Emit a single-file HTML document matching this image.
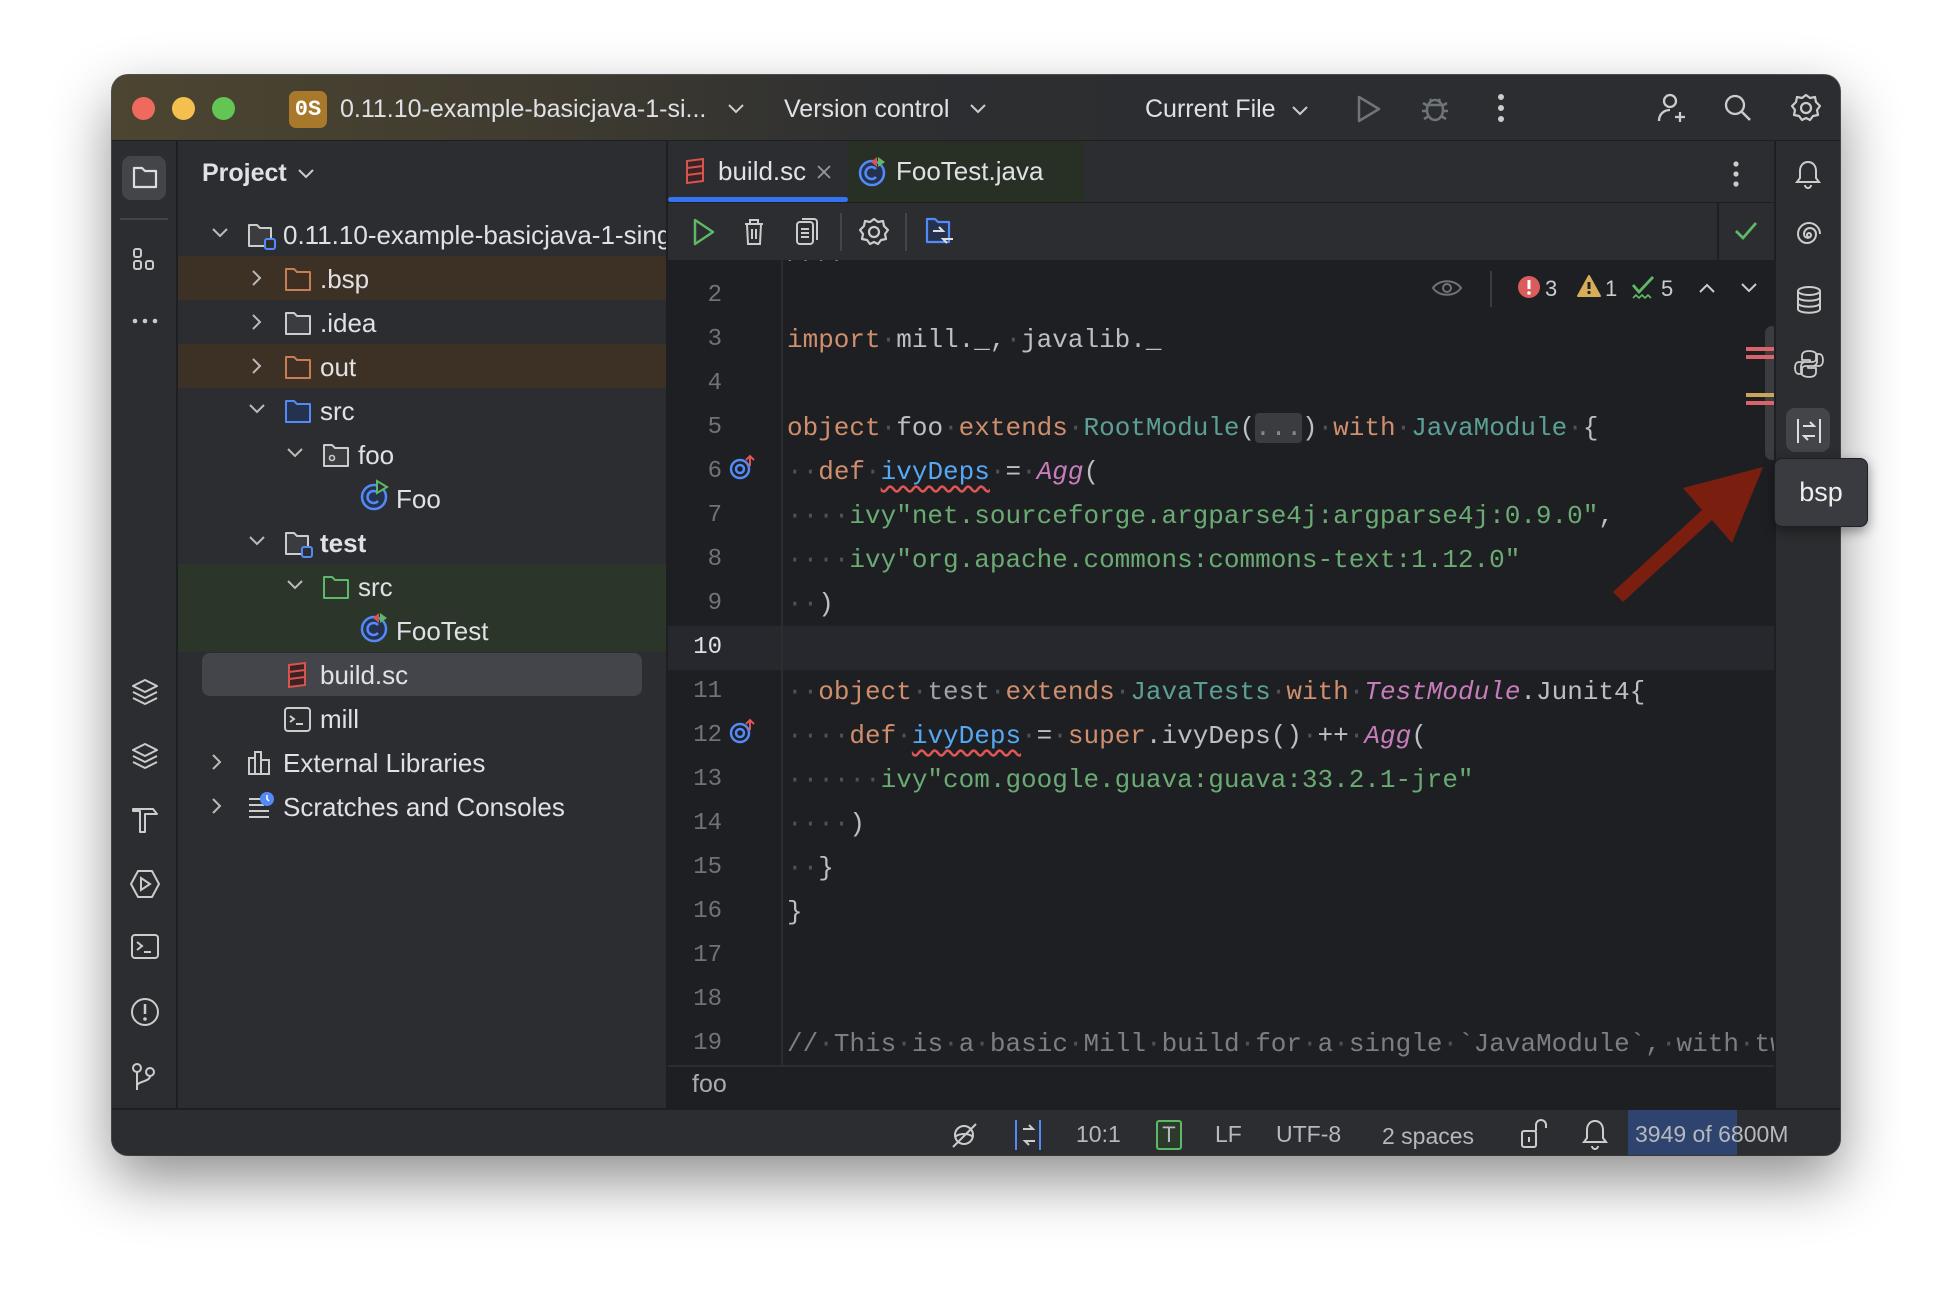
<!DOCTYPE html>
<html><head><meta charset="utf-8"><style>
*{margin:0;padding:0;box-sizing:border-box}
body{width:1952px;height:1304px;background:#fff;position:relative;overflow:hidden;font-family:"Liberation Sans",sans-serif;color:#dfe1e5}
.abs{position:absolute}
.win{position:absolute;left:112px;top:75px;width:1728px;height:1080px;border-radius:16px;background:#2b2d30;box-shadow:0 25px 60px rgba(0,0,0,.45),0 0 0 1px #555;overflow:hidden}
.title{position:absolute;left:0;top:0;width:1728px;height:66px;background:linear-gradient(90deg,#4c4531 0%,#3f3b30 25%,#2e2f31 45%,#2b2d30 60%);border-bottom:1px solid #1e1f22}
.t{position:absolute;white-space:nowrap;font-size:25px;line-height:30px}
.tree .tx{position:absolute;font-size:26px;line-height:30px;white-space:nowrap;color:#dfe1e5}
.code{position:absolute;left:556px;top:185px;width:1106px;height:805px;background:#1e1f22;overflow:hidden}
.ln{position:absolute;right:1052px;width:60px;text-align:right;font:24px "Liberation Mono",monospace;color:#6f737a}
.cl{position:absolute;left:119px;white-space:pre;font:26px/44px "Liberation Mono",monospace;color:#bcbec4;height:44px}
.d{color:#4e5157}.k{color:#cf8e6d}.s{color:#6aab73}.c{color:#5c9f96}.p{color:#c77dbb;font-style:italic}.f{color:#56a8f5;text-decoration:underline wavy #e05555;text-underline-offset:6px}.g{color:#7a7e85}.gr{color:#a0a3a8}
svg{position:absolute;overflow:visible}
</style></head><body>
<div class="win">
 <div class="title">
  <div class="abs" style="left:20px;top:22px;width:23px;height:23px;border-radius:50%;background:#ee6a5f"></div>
  <div class="abs" style="left:60px;top:22px;width:23px;height:23px;border-radius:50%;background:#f5bf4f"></div>
  <div class="abs" style="left:100px;top:22px;width:23px;height:23px;border-radius:50%;background:#62c554"></div>
  <div class="abs" style="left:177px;top:16px;width:38px;height:37px;border-radius:7px;background:#a8792a;color:#fff;font:bold 22px/37px 'Liberation Mono',monospace;text-align:center">0S</div>
  <div class="t" style="left:228px;top:19px;color:#dfe1e5">0.11.10-example-basicjava-1-si...</div>
  <svg style="left:616px;top:29px" width="16" height="10"><path d="M1 1l7 7 7-7" stroke="#ccc" stroke-width="2" fill="none"/></svg>
  <div class="t" style="left:672px;top:19px">Version control</div>
  <svg style="left:858px;top:29px" width="16" height="10"><path d="M1 1l7 7 7-7" stroke="#ccc" stroke-width="2" fill="none"/></svg>
  <div class="t" style="left:1033px;top:19px">Current File</div>
  <svg style="left:1180px;top:31px" width="16" height="10"><path d="M1 1l7 7 7-7" stroke="#ccc" stroke-width="2" fill="none"/></svg>
  <svg style="left:1244px;top:20px" width="26" height="28"><path d="M3 2l20 12L3 26z" stroke="#6f737a" stroke-width="2.5" fill="none" stroke-linejoin="round"/></svg>
  <svg style="left:1308px;top:18px" width="30" height="30"><ellipse cx="15" cy="17" rx="8" ry="10" stroke="#6f737a" stroke-width="2.5" fill="none"/><path d="M8 12h14M3 10l5 3M27 10l-5 3M2 18h5M28 18h-5M4 26l5-3M26 26l-5-3M10 6l2 3M20 6l-2 3" stroke="#6f737a" stroke-width="2.5"/></svg>
  <svg style="left:1385px;top:18px" width="8" height="30"><circle cx="4" cy="4" r="3" fill="#ccc"/><circle cx="4" cy="15" r="3" fill="#ccc"/><circle cx="4" cy="26" r="3" fill="#ccc"/></svg>
  <svg style="left:1545px;top:18px" width="30" height="32"><circle cx="13" cy="8" r="6" stroke="#ccc" stroke-width="2.3" fill="none"/><path d="M2 28c0-7 5-11 11-11M18 24h10M23 19v10" stroke="#ccc" stroke-width="2.3" fill="none"/></svg>
  <svg style="left:1612px;top:19px" width="28" height="28"><circle cx="11" cy="11" r="9" stroke="#ccc" stroke-width="2.3" fill="none"/><path d="M18 18l8 8" stroke="#ccc" stroke-width="2.5"/></svg>
  <svg style="left:1679px;top:18px" width="30" height="30"><path d="M15 2l4 3 5-1 1 5 4 4-3 4 1 5-5 1-3 4-4-2-4 2-3-4-5-1 1-5-3-4 4-4 1-5 5 1z" stroke="#ccc" stroke-width="2.2" fill="none" stroke-linejoin="round"/><circle cx="15" cy="15" r="5" stroke="#ccc" stroke-width="2.2" fill="none"/></svg>
 </div>

 <!-- left strip -->
 <div class="abs" style="left:0;top:66px;width:66px;height:967px;background:#2b2d30;border-right:2px solid #1e1f22"></div>
 <div class="abs" style="left:10px;top:81px;width:44px;height:44px;border-radius:9px;background:#43454a"></div>
 <svg style="left:20px;top:90px" width="26" height="24"><path d="M2 3h8l3 3h11v16H2z" stroke="#ddd" stroke-width="2.2" fill="none" stroke-linejoin="round"/></svg>
 <div class="abs" style="left:8px;top:143px;width:48px;height:2px;background:#43454a"></div>
 <svg style="left:20px;top:172px" width="24" height="26"><rect x="2" y="2" width="7" height="8" rx="2" stroke="#ccc" stroke-width="2" fill="none"/><rect x="2" y="14" width="7" height="8" rx="2" stroke="#ccc" stroke-width="2" fill="none"/><rect x="14" y="14" width="7" height="8" rx="2" stroke="#ccc" stroke-width="2" fill="none"/></svg>
 <svg style="left:20px;top:243px" width="26" height="6"><circle cx="3" cy="3" r="2.3" fill="#ccc"/><circle cx="13" cy="3" r="2.3" fill="#ccc"/><circle cx="23" cy="3" r="2.3" fill="#ccc"/></svg>
 <svg style="left:19px;top:603px" width="28" height="28"><path d="M14 2L26 8 14 14 2 8z M2 14l12 6 12-6 M2 20l12 6 12-6" stroke="#ccc" stroke-width="2" fill="none" stroke-linejoin="round"/></svg>
 <svg style="left:19px;top:667px" width="28" height="28"><path d="M14 2L26 8 14 14 2 8z M2 14l12 6 12-6 M2 20l12 6 12-6" stroke="#ccc" stroke-width="2" fill="none" stroke-linejoin="round"/></svg>
 <svg style="left:19px;top:730px" width="28" height="30"><path d="M2 4h20l4 5H14v18H9V6H2z" stroke="#ccc" stroke-width="2" fill="none" stroke-linejoin="round"/></svg>
 <svg style="left:17px;top:794px" width="32" height="30"><path d="M9 2h14l7 13-7 13H9L2 15z" stroke="#ccc" stroke-width="2" fill="none"/><path d="M12 9l9 6-9 6z" stroke="#ccc" stroke-width="2" fill="none"/></svg>
 <svg style="left:19px;top:859px" width="28" height="26"><rect x="1" y="1" width="26" height="23" rx="3" stroke="#ccc" stroke-width="2" fill="none"/><path d="M6 8l5 4-5 4M13 18h7" stroke="#ccc" stroke-width="2" fill="none"/></svg>
 <svg style="left:18px;top:922px" width="30" height="30"><circle cx="15" cy="15" r="13" stroke="#ccc" stroke-width="2" fill="none"/><path d="M15 7v10" stroke="#ccc" stroke-width="2.5"/><circle cx="15" cy="22" r="1.8" fill="#ccc"/></svg>
 <svg style="left:19px;top:987px" width="26" height="30"><circle cx="6" cy="6" r="4" stroke="#ccc" stroke-width="2" fill="none"/><circle cx="19" cy="10" r="4" stroke="#ccc" stroke-width="2" fill="none"/><path d="M6 10v18M19 14c0 6-13 5-13 10" stroke="#ccc" stroke-width="2" fill="none"/></svg>

 <!-- project panel -->
 <div class="abs" style="left:90px;top:84px;font-size:25px;font-weight:bold;color:#dfe1e5">Project</div>
 <svg style="left:186px;top:94px" width="16" height="10"><path d="M1 1l7 7 7-7" stroke="#ccc" stroke-width="2" fill="none"/></svg>
 <div class="tree">
  <div class="abs" style="left:66px;top:181px;width:490px;height:44px;background:#3d3024"></div>
  <div class="abs" style="left:66px;top:269px;width:490px;height:44px;background:#3d3024"></div>
  <div class="abs" style="left:66px;top:489px;width:490px;height:88px;background:#2b3529"></div>
  <div class="abs" style="left:90px;top:578px;width:440px;height:43px;border-radius:8px;background:#43454a"></div>
  <svg style="left:100px;top:153px" width="16" height="10"><path d="M1 1l7 7 7-7" stroke="#bbb" stroke-width="2" fill="none"/></svg>
  <svg style="left:140px;top:195px" width="10" height="16"><path d="M1 1l7 7-7 7" stroke="#bbb" stroke-width="2" fill="none"/></svg>
  <svg style="left:140px;top:239px" width="10" height="16"><path d="M1 1l7 7-7 7" stroke="#bbb" stroke-width="2" fill="none"/></svg>
  <svg style="left:140px;top:283px" width="10" height="16"><path d="M1 1l7 7-7 7" stroke="#bbb" stroke-width="2" fill="none"/></svg>
  <svg style="left:137px;top:329px" width="16" height="10"><path d="M1 1l7 7 7-7" stroke="#bbb" stroke-width="2" fill="none"/></svg>
  <svg style="left:175px;top:373px" width="16" height="10"><path d="M1 1l7 7 7-7" stroke="#bbb" stroke-width="2" fill="none"/></svg>
  <svg style="left:137px;top:461px" width="16" height="10"><path d="M1 1l7 7 7-7" stroke="#bbb" stroke-width="2" fill="none"/></svg>
  <svg style="left:175px;top:505px" width="16" height="10"><path d="M1 1l7 7 7-7" stroke="#bbb" stroke-width="2" fill="none"/></svg>
  <svg style="left:100px;top:679px" width="10" height="16"><path d="M1 1l7 7-7 7" stroke="#bbb" stroke-width="2" fill="none"/></svg>
  <svg style="left:100px;top:723px" width="10" height="16"><path d="M1 1l7 7-7 7" stroke="#bbb" stroke-width="2" fill="none"/></svg>
  <svg style="left:135px;top:148px" width="32" height="28"><path d="M2 2h8l3 3h11v18H2z" stroke="#ccc" stroke-width="2" fill="#3a3c40" stroke-linejoin="round"/><rect x="18" y="16" width="10" height="10" rx="2" stroke="#548af7" stroke-width="2" fill="#2b2d30"/></svg>
  <svg style="left:172px;top:192px" width="30" height="26"><path d="M2 2h8l3 3h13v18H2z" stroke="#c77d55" stroke-width="2" fill="#3f2f22" stroke-linejoin="round"/></svg>
  <svg style="left:172px;top:236px" width="30" height="26"><path d="M2 2h8l3 3h13v18H2z" stroke="#ccc" stroke-width="2" fill="#3a3c40" stroke-linejoin="round"/></svg>
  <svg style="left:172px;top:280px" width="30" height="26"><path d="M2 2h8l3 3h13v18H2z" stroke="#c77d55" stroke-width="2" fill="#3f2f22" stroke-linejoin="round"/></svg>
  <svg style="left:172px;top:324px" width="30" height="26"><path d="M2 2h8l3 3h13v18H2z" stroke="#548af7" stroke-width="2" fill="#25324d" stroke-linejoin="round"/></svg>
  <svg style="left:210px;top:368px" width="30" height="26"><path d="M2 2h8l3 3h13v18H2z" stroke="#ccc" stroke-width="2" fill="#3a3c40" stroke-linejoin="round"/><circle cx="10" cy="15" r="2.5" stroke="#ccc" stroke-width="1.6" fill="none"/></svg>
  <svg style="left:248px;top:404px" width="32" height="32"><circle cx="14" cy="18" r="12" stroke="#548af7" stroke-width="2.5" fill="#25324d"/><path d="M18 14a6 6 0 1 0 0 8" stroke="#548af7" stroke-width="2.5" fill="none"/><path d="M17 2l10 6-10 6z" fill="#2b2d30" stroke="#5fb865" stroke-width="2"/></svg>
  <svg style="left:172px;top:456px" width="32" height="28"><path d="M2 2h8l3 3h11v18H2z" stroke="#ccc" stroke-width="2" fill="#3a3c40" stroke-linejoin="round"/><rect x="18" y="16" width="10" height="10" rx="2" stroke="#548af7" stroke-width="2" fill="#2b2d30"/></svg>
  <svg style="left:210px;top:500px" width="30" height="26"><path d="M2 2h8l3 3h13v18H2z" stroke="#5fb865" stroke-width="2" fill="#2b3529" stroke-linejoin="round"/></svg>
  <svg style="left:248px;top:536px" width="32" height="32"><circle cx="14" cy="18" r="12" stroke="#548af7" stroke-width="2.5" fill="#25324d"/><path d="M18 14a6 6 0 1 0 0 8" stroke="#548af7" stroke-width="2.5" fill="none"/><path d="M19 2l-6 5 6 5z" fill="#d9534f"/><path d="M20 2l7 5-7 5z" fill="#5fb865"/></svg>
  <svg style="left:174px;top:586px" width="22" height="28"><path d="M3 4l16-2v22l-16 2z M3 11l16-2 M3 18l16-2" stroke="#d9534f" stroke-width="2" fill="#3a2322"/></svg>
  <svg style="left:172px;top:632px" width="28" height="26"><rect x="1" y="1" width="25" height="23" rx="3" stroke="#ccc" stroke-width="2" fill="none"/><path d="M6 9l4 3-4 3M12 17h7" stroke="#ccc" stroke-width="2" fill="none"/></svg>
  <svg style="left:135px;top:675px" width="26" height="26"><path d="M2 8h6v16H2z M8 2h6v22H8z M14 10h8v14h-8z" stroke="#ccc" stroke-width="2" fill="none"/></svg>
  <svg style="left:135px;top:716px" width="28" height="30"><path d="M2 8h12M2 14h15M2 20h20M2 26h20" stroke="#ccc" stroke-width="2"/><circle cx="20" cy="8" r="7" fill="#548af7"/><path d="M20 4v4l2 2" stroke="#fff" stroke-width="1.5" fill="none"/></svg>
  <div class="tx" style="left:171px;top:145px">0.11.10-example-basicjava-1-single-module</div>
  <div class="tx" style="left:208px;top:189px">.bsp</div>
  <div class="tx" style="left:208px;top:233px">.idea</div>
  <div class="tx" style="left:208px;top:277px">out</div>
  <div class="tx" style="left:208px;top:321px">src</div>
  <div class="tx" style="left:246px;top:365px">foo</div>
  <div class="tx" style="left:284px;top:409px">Foo</div>
  <div class="tx" style="left:208px;top:453px;font-weight:bold">test</div>
  <div class="tx" style="left:246px;top:497px">src</div>
  <div class="tx" style="left:284px;top:541px">FooTest</div>
  <div class="tx" style="left:208px;top:585px">build.sc</div>
  <div class="tx" style="left:208px;top:629px">mill</div>
  <div class="tx" style="left:171px;top:673px">External Libraries</div>
  <div class="tx" style="left:171px;top:717px">Scratches and Consoles</div>
 </div>
 <div class="abs" style="left:554px;top:66px;width:2px;height:1000px;background:#1e1f22"></div>

 <!-- tabs -->
 <div class="abs" style="left:556px;top:66px;width:1106px;height:62px;background:#2b2d30;border-bottom:1px solid #1e1f22"></div>
 <div class="abs" style="left:736px;top:66px;width:236px;height:61px;background:#283026"></div>
 <div class="abs" style="left:556px;top:122px;width:180px;height:5px;border-radius:3px;background:#3574f0"></div>
 <svg style="left:572px;top:82px" width="22" height="28"><path d="M3 4l16-2v22l-16 2z M3 11l16-2 M3 18l16-2" stroke="#d9534f" stroke-width="2" fill="#3a2322"/></svg>
 <div class="t" style="left:606px;top:81px;font-size:26px">build.sc</div>
 <svg style="left:705px;top:90px" width="14" height="14"><path d="M1 1l12 12M13 1L1 13" stroke="#999" stroke-width="1.8"/></svg>
 <svg style="left:746px;top:80px" width="32" height="32"><circle cx="14" cy="18" r="12" stroke="#548af7" stroke-width="2.5" fill="#25324d"/><path d="M18 14a6 6 0 1 0 0 8" stroke="#548af7" stroke-width="2.5" fill="none"/><path d="M19 2l-6 5 6 5z" fill="#d9534f"/><path d="M20 2l7 5-7 5z" fill="#5fb865"/></svg>
 <div class="t" style="left:784px;top:81px;font-size:26px">FooTest.java</div>
 <svg style="left:1620px;top:86px" width="8" height="26"><circle cx="4" cy="3" r="2.6" fill="#ccc"/><circle cx="4" cy="13" r="2.6" fill="#ccc"/><circle cx="4" cy="23" r="2.6" fill="#ccc"/></svg>

 <!-- editor toolbar -->
 <div class="abs" style="left:556px;top:128px;width:1106px;height:57px;background:#2b2d30"></div>
 <svg style="left:580px;top:143px" width="24" height="28"><path d="M3 2l18 12L3 26z" stroke="#5fb865" stroke-width="2.5" fill="none" stroke-linejoin="round"/></svg>
 <svg style="left:631px;top:142px" width="22" height="30"><path d="M2 7h18M7 7V3h8v4M4 7l1 20h12l1-20M9 12v10M13 12v10" stroke="#ccc" stroke-width="2" fill="none"/></svg>
 <svg style="left:683px;top:142px" width="24" height="30"><rect x="2" y="5" width="16" height="22" rx="3" stroke="#ccc" stroke-width="2" fill="none"/><path d="M7 2h12a3 3 0 0 1 3 3v18M6 12h8M6 16h8M6 20h8" stroke="#ccc" stroke-width="2" fill="none"/></svg>
 <div class="abs" style="left:728px;top:138px;width:2px;height:38px;background:#43454a"></div>
 <svg style="left:747px;top:142px" width="30" height="30"><path d="M15 2l4 3 5-1 1 5 4 4-3 4 1 5-5 1-3 4-4-2-4 2-3-4-5-1 1-5-3-4 4-4 1-5 5 1z" stroke="#ccc" stroke-width="2.2" fill="none" stroke-linejoin="round"/><circle cx="15" cy="15" r="5" stroke="#ccc" stroke-width="2.2" fill="none"/></svg>
 <div class="abs" style="left:793px;top:138px;width:2px;height:38px;background:#43454a"></div>
 <svg style="left:813px;top:142px" width="32" height="30"><path d="M2 2h8l3 3h11v20H2z" stroke="#548af7" stroke-width="2.2" fill="#25324d" stroke-linejoin="round"/><path d="M8 14h10l-4-4M28 22H18l4 4" stroke="#ddd" stroke-width="2" fill="none"/></svg>
 <div class="abs" style="left:1605px;top:128px;width:2px;height:57px;background:#1e1f22"></div>
 <svg style="left:1622px;top:146px" width="24" height="20"><path d="M2 10l7 7L22 2" stroke="#5fb865" stroke-width="2.8" fill="none"/></svg>

 <!-- code -->
 <div class="code">
  <div class="abs" style="left:0;top:366px;width:1106px;height:44px;background:#26282e"></div>
  <div class="abs" style="left:113px;top:0;width:2px;height:805px;background:#2b2d30"></div>
  <div class="cl g" style="top:-28px">////</div>
  <div class="ln" style="top:22px">2</div><div class="ln" style="top:66px">3</div><div class="ln" style="top:110px">4</div><div class="ln" style="top:154px">5</div><div class="ln" style="top:198px">6</div><div class="ln" style="top:242px">7</div><div class="ln" style="top:286px">8</div><div class="ln" style="top:330px">9</div><div class="ln" style="top:374px;color:#dfe1e5">10</div><div class="ln" style="top:418px">11</div><div class="ln" style="top:462px">12</div><div class="ln" style="top:506px">13</div><div class="ln" style="top:550px">14</div><div class="ln" style="top:594px">15</div><div class="ln" style="top:638px">16</div><div class="ln" style="top:682px">17</div><div class="ln" style="top:726px">18</div><div class="ln" style="top:770px">19</div>
  <svg style="left:62px;top:194px" width="26" height="26"><circle cx="10" cy="15" r="9" stroke="#548af7" stroke-width="2.5" fill="none"/><circle cx="10" cy="15" r="4" stroke="#548af7" stroke-width="2.5" fill="none"/><path d="M20 12V2M16 6l4-4 4 4" stroke="#e05555" stroke-width="2" fill="none"/></svg>
  <svg style="left:62px;top:458px" width="26" height="26"><circle cx="10" cy="15" r="9" stroke="#548af7" stroke-width="2.5" fill="none"/><circle cx="10" cy="15" r="4" stroke="#548af7" stroke-width="2.5" fill="none"/><path d="M20 12V2M16 6l4-4 4 4" stroke="#e05555" stroke-width="2" fill="none"/></svg>
  <div class="cl" style="top:58px"><span class="k">import</span><span class="d">·</span>mill._,<span class="d">·</span>javalib._</div>
  <div class="cl" style="top:146px"><span class="k">object</span><span class="d">·</span>foo<span class="d">·</span><span class="k">extends</span><span class="d">·</span><span class="c">RootModule</span>(<span style="background:#3a3c40;border-radius:4px;color:#888">...</span>)<span class="d">·</span><span class="k">with</span><span class="d">·</span><span class="c">JavaModule</span><span class="d">·</span>{</div>
  <div class="cl" style="top:190px"><span class="d">··</span><span class="k">def</span><span class="d">·</span><span class="f">ivyDeps</span><span class="d">·</span>=<span class="d">·</span><span class="p">Agg</span>(</div>
  <div class="cl" style="top:234px"><span class="d">····</span><span class="s">ivy"net.sourceforge.argparse4j:argparse4j:0.9.0"</span>,</div>
  <div class="cl" style="top:278px"><span class="d">····</span><span class="s">ivy"org.apache.commons:commons-text:1.12.0"</span></div>
  <div class="cl" style="top:322px"><span class="d">··</span>)</div>
  <div class="cl" style="top:410px"><span class="d">··</span><span class="k">object</span><span class="d">·</span><span class="gr">test</span><span class="d">·</span><span class="k">extends</span><span class="d">·</span><span class="c">JavaTests</span><span class="d">·</span><span class="k">with</span><span class="d">·</span><span class="p">TestModule</span>.Junit4{</div>
  <div class="cl" style="top:454px"><span class="d">····</span><span class="k">def</span><span class="d">·</span><span class="f">ivyDeps</span><span class="d">·</span>=<span class="d">·</span><span class="k">super</span>.ivyDeps()<span class="d">·</span>++<span class="d">·</span><span class="p">Agg</span>(</div>
  <div class="cl" style="top:498px"><span class="d">······</span><span class="s">ivy"com.google.guava:guava:33.2.1-jre"</span></div>
  <div class="cl" style="top:542px"><span class="d">····</span>)</div>
  <div class="cl" style="top:586px"><span class="d">··</span>}</div>
  <div class="cl" style="top:630px">}</div>
  <div class="cl g" style="top:762px">//<span class="d">·</span>This<span class="d">·</span>is<span class="d">·</span>a<span class="d">·</span>basic<span class="d">·</span>Mill<span class="d">·</span>build<span class="d">·</span>for<span class="d">·</span>a<span class="d">·</span>single<span class="d">·</span>`JavaModule`,<span class="d">·</span>with<span class="d">·</span>two</div>
  <!-- inspection widget -->
  <svg style="left:763px;top:17px" width="32" height="22"><path d="M2 11C8 2 24 2 30 11 24 20 8 20 2 11z" stroke="#6f737a" stroke-width="2" fill="none"/><circle cx="16" cy="11" r="4" stroke="#6f737a" stroke-width="2" fill="none"/></svg>
  <div class="abs" style="left:822px;top:11px;width:2px;height:36px;background:#3a3c40"></div>
  <svg style="left:849px;top:15px" width="24" height="24"><circle cx="12" cy="12" r="11" fill="#db5c5c"/><path d="M12 5v9" stroke="#fff" stroke-width="3"/><circle cx="12" cy="18" r="1.8" fill="#fff"/></svg>
  <div class="t" style="left:877px;top:14px;font-size:22px;color:#ccc">3</div>
  <svg style="left:909px;top:15px" width="24" height="22"><path d="M12 1L23 21H1z" fill="#d6ae58" stroke="#d6ae58" stroke-linejoin="round" stroke-width="2"/><path d="M12 7v7" stroke="#1e1f22" stroke-width="3"/><circle cx="12" cy="17.5" r="1.6" fill="#1e1f22"/></svg>
  <div class="t" style="left:937px;top:14px;font-size:22px;color:#ccc">1</div>
  <svg style="left:963px;top:15px" width="24" height="26"><path d="M2 10l6 7L22 2" stroke="#5fb865" stroke-width="2.8" fill="none"/><path d="M2 23l3-3 3 3 3-3 3 3 3-3 3 3" stroke="#5fb865" stroke-width="1.6" fill="none"/></svg>
  <div class="t" style="left:993px;top:14px;font-size:22px;color:#ccc">5</div>
  <svg style="left:1031px;top:23px" width="16" height="10"><path d="M1 9l7-7 7 7" stroke="#ccc" stroke-width="2" fill="none"/></svg>
  <svg style="left:1073px;top:23px" width="16" height="10"><path d="M1 1l7 7 7-7" stroke="#ccc" stroke-width="2" fill="none"/></svg>
  <!-- scrollbar / markers -->
  <div class="abs" style="left:1097px;top:66px;width:14px;height:134px;border-radius:7px;background:#3a3c40"></div>
  <div class="abs" style="left:1078px;top:87px;width:28px;height:4px;background:#d9656a"></div>
  <div class="abs" style="left:1078px;top:95px;width:28px;height:4px;background:#d9656a"></div>
  <div class="abs" style="left:1078px;top:133px;width:28px;height:4px;background:#c8a75a"></div>
  <div class="abs" style="left:1078px;top:141px;width:28px;height:4px;background:#d9656a"></div>
 </div>
 <!-- breadcrumb -->
 <div class="abs" style="left:556px;top:990px;width:1106px;height:43px;background:#1e1f22;border-top:2px solid #2b2d30"></div>
 <div class="t" style="left:580px;top:994px;color:#a8abb0">foo</div>

 <!-- right strip -->
 <div class="abs" style="left:1662px;top:66px;width:66px;height:967px;background:#2b2d30;border-left:2px solid #1e1f22"></div>
 <svg style="left:1683px;top:84px" width="26" height="30"><path d="M13 3c-5 0-8 4-8 9v7l-3 4h22l-3-4v-7c0-5-3-9-8-9zM10 26a3 3 0 0 0 6 0" stroke="#ccc" stroke-width="2" fill="none"/></svg>
 <svg style="left:1683px;top:148px" width="28" height="28"><path d="M14 14a2 2 0 1 1 2-2c0 4-7 4-7-1a6 6 0 0 1 12 0c0 6-5 9-9 9a9 9 0 0 1-9-9 11 11 0 0 1 22 0" stroke="#ccc" stroke-width="2" fill="none"/></svg>
 <svg style="left:1684px;top:210px" width="26" height="30"><ellipse cx="13" cy="6" rx="11" ry="4" stroke="#ccc" stroke-width="2" fill="none"/><path d="M2 6v18c0 5 22 5 22 0V6M2 12c0 5 22 5 22 0M2 18c0 5 22 5 22 0" stroke="#ccc" stroke-width="2" fill="none"/></svg>
 <svg style="left:1682px;top:274px" width="30" height="30"><path d="M15 2c-5 0-7 2-7 5v4h8v2H5c-3 0-4 3-4 6s1 6 4 6h3v-5c0-2 2-3 4-3h7c2 0 4-2 4-4V7c0-3-3-5-8-5zM15 28c5 0 7-2 7-5v-4h-8v-2h11c3 0 4-3 4-6s-1-6-4-6h-3v5c0 2-2 3-4 3h-7c-2 0-4 2-4 4v6c0 3 3 5 8 5z" stroke="#ccc" stroke-width="1.8" fill="none" stroke-linejoin="round"/></svg>
 <div class="abs" style="left:1674px;top:333px;width:44px;height:44px;border-radius:9px;background:#43454a"></div>
 <svg style="left:1684px;top:342px" width="26" height="28"><path d="M2 2v24M24 2v24M7 9h11l-4-4M19 19H8l4 4" stroke="#ddd" stroke-width="2" fill="none"/></svg>

 <!-- status bar -->
 <div class="abs" style="left:0;top:1033px;width:1728px;height:47px;background:#2b2d30;border-top:2px solid #1e1f22"></div>
 <svg style="left:838px;top:1046px" width="28" height="28"><circle cx="14" cy="14" r="9" stroke="#ccc" stroke-width="2" fill="none"/><path d="M3 26L26 3M5 16c4-4 14-4 18 0" stroke="#ccc" stroke-width="2" fill="none"/></svg>
 <div class="abs" style="left:903px;top:1045px;width:2px;height:30px;background:#548af7"></div>
 <div class="abs" style="left:927px;top:1045px;width:2px;height:30px;background:#548af7"></div>
 <svg style="left:907px;top:1047px" width="20" height="26"><path d="M4 7h10l-4-4M16 19H6l4 4" stroke="#ccc" stroke-width="2" fill="none"/></svg>
 <div class="t" style="left:964px;top:1044px;font-size:23px;color:#b5b8bd">10:1</div>
 <div class="abs" style="left:1044px;top:1045px;width:26px;height:30px;border:2px solid #5fb865;border-radius:3px;background:#2b3a2b;color:#b5b8bd;font:22px/26px 'Liberation Sans',sans-serif;text-align:center">T</div>
 <div class="t" style="left:1103px;top:1044px;font-size:23px;color:#b5b8bd">LF</div>
 <div class="t" style="left:1164px;top:1044px;font-size:23px;color:#b5b8bd">UTF-8</div>
 <div class="t" style="left:1270px;top:1046px;font-size:23px;color:#b5b8bd">2 spaces</div>
 <svg style="left:1408px;top:1043px" width="28" height="32"><rect x="2" y="13" width="14" height="16" rx="2" stroke="#ccc" stroke-width="2" fill="none"/><path d="M16 13V7a5 5 0 0 1 10 0v3M9 19v5" stroke="#ccc" stroke-width="2" fill="none"/></svg>
 <svg style="left:1470px;top:1043px" width="26" height="32"><path d="M13 3c-5 0-8 4-8 9v8l-3 4h22l-3-4v-8c0-5-3-9-8-9zM10 28a3 3 0 0 0 6 0" stroke="#ccc" stroke-width="2" fill="none"/></svg>
 <div class="abs" style="left:1516px;top:1035px;width:109px;height:45px;background:#2e436e"></div>
 <div class="t" style="left:1523px;top:1044px;font-size:23px;color:#b5b8bd">3949 of 6800M</div>
</div>

<svg style="left:0;top:0" width="1952" height="1304"><polygon points="1613,592 1702,510 1683,488 1763,467 1732,543 1712,520 1623,602" fill="#7a1e10"/></svg>
<div class="abs" style="left:1774px;top:458px;width:94px;height:69px;border-radius:8px;background:#393b40;border:1px solid #1e1f22;box-shadow:0 4px 12px rgba(0,0,0,.4);color:#eee;font-size:27px;line-height:67px;text-align:center">bsp</div>
</body></html>
